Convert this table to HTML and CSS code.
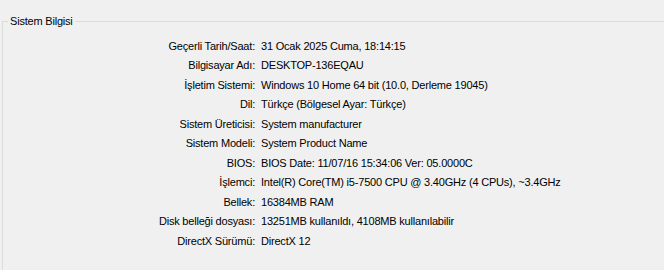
FILE: index.html
```html
<!DOCTYPE html>
<html lang="tr">
<head>
<meta charset="utf-8">
<link rel="stylesheet" href="styles.css">
</head>
<body>
<fieldset class="group">
  <legend class="group-title">Sistem Bilgisi</legend>
  <div class="info">
    <div class="label">Geçerli Tarih/Saat:</div><div class="value">31 Ocak 2025 Cuma, 18:14:15</div>
    <div class="label">Bilgisayar Adı:</div><div class="value">DESKTOP-136EQAU</div>
    <div class="label">İşletim Sistemi:</div><div class="value">Windows 10 Home 64 bit (10.0, Derleme 19045)</div>
    <div class="label">Dil:</div><div class="value">Türkçe (Bölgesel Ayar: Türkçe)</div>
    <div class="label">Sistem Üreticisi:</div><div class="value">System manufacturer</div>
    <div class="label">Sistem Modeli:</div><div class="value">System Product Name</div>
    <div class="label">BIOS:</div><div class="value">BIOS Date: 11/07/16 15:34:06 Ver: 05.0000C</div>
    <div class="label">İşlemci:</div><div class="value">Intel(R) Core(TM) i5-7500 CPU @ 3.40GHz (4 CPUs), ~3.4GHz</div>
    <div class="label">Bellek:</div><div class="value">16384MB RAM</div>
    <div class="label">Disk belleği dosyası:</div><div class="value">13251MB kullanıldı, 4108MB kullanılabilir</div>
    <div class="label">DirectX Sürümü:</div><div class="value">DirectX 12</div>
  </div>
</fieldset>
</body>
</html>
```
FILE: styles.css
```css
html, body {
  margin: 0;
  padding: 0;
  background: #f0f0f0;
  height: 270px;
  overflow: hidden;
}
body {
  font-family: "Segoe UI", "Liberation Sans", Arial, sans-serif;
  font-size: 11px;
  letter-spacing: -0.2px;
  color: #000;
}
.group {
  margin: 14px -10px 0 2px;
  padding: 0;
  border: 1px solid #dcdcdc;
  border-bottom: none;
  min-width: 0;
  padding-bottom: 30px;
}
.group-title {
  padding: 0 2px;
  margin-left: 5px;
  line-height: 15px;
}
.info {
  display: grid;
  grid-template-columns: 252px auto;
  column-gap: 6px;
  margin-top: 7.5px;
}
.label {
  text-align: right;
  line-height: 19.5px;
  white-space: nowrap;
}
.value {
  line-height: 19.5px;
  white-space: nowrap;
}
```
